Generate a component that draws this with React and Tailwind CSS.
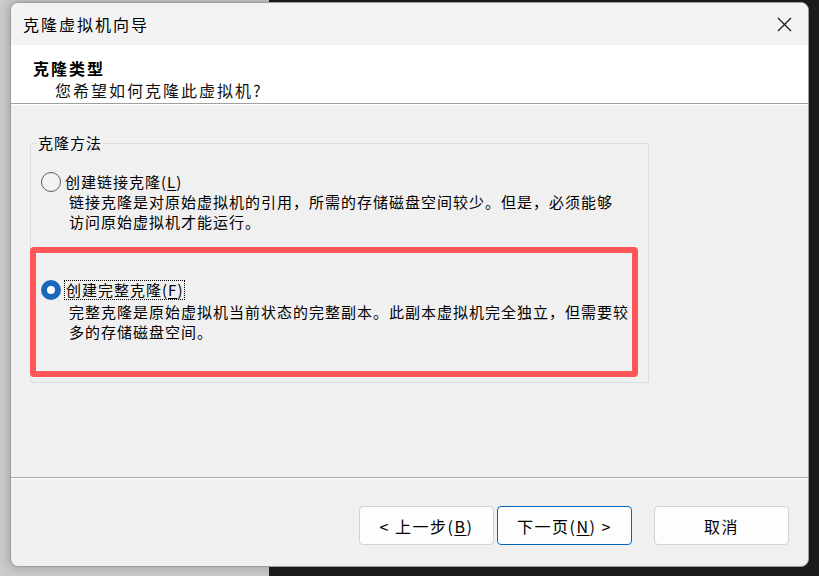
import React from 'react'

const AccessKey = ({ k }) => (
  <>
    (<span className="underline underline-offset-2">{k}</span>)
  </>
)

const Radio = ({ checked }) =>
  checked ? (
    <span className="block h-[20px] w-[20px] shrink-0 rounded-full border-[6px] border-[#1b68bb] bg-white" />
  ) : (
    <span className="block h-[20px] w-[20px] shrink-0 rounded-full border border-[#5f5f5f] bg-[#f3f3f3]" />
  )

const Button = ({ children, primary }) => (
  <button
    type="button"
    className={
      primary
        ? 'flex h-[39px] w-[135px] items-center justify-center rounded-[4px] border border-[#0067c0] bg-[#fdfdfd] text-[16px] tracking-[1.5px] text-black'
        : 'flex h-[39px] w-[135px] items-center justify-center rounded-[4px] border border-[#d2d2d2] bg-[#fdfdfd] text-[16px] tracking-[1.5px] text-black'
    }
  >
    {children}
  </button>
)

export default function App() {
  return (
    <div className="relative h-[576px] w-[819px] overflow-hidden bg-[linear-gradient(to_right,#cbcbcb_269px,#1c1c1c_269px)] pl-[10px] pt-[2px] font-['Noto_Sans_CJK_SC','Noto_Sans',sans-serif] text-black">
      <div className="flex h-[565px] w-[799px] flex-col overflow-hidden rounded-[8px] border border-[#9c9c9c] bg-[#f0f0f0] shadow-[0_0_12px_rgba(0,0,0,0.25)]">
        {/* title bar */}
        <div className="flex h-[42px] shrink-0 items-center justify-between bg-[#f3f3f3] pl-[12px] pr-[16px]">
          <span className="text-[16px] leading-[20px] tracking-[2px]">克隆虚拟机向导</span>
          <svg width="15" height="15" viewBox="0 0 15 15" className="mt-[1px]">
            <path d="M1 1L14 14M14 1L1 14" stroke="#1a1a1a" strokeWidth="1.3" />
          </svg>
        </div>

        {/* header */}
        <div className="h-[59px] shrink-0 border-b border-[#a0a0a0] bg-white pl-[22px] pt-[12px]">
          <div className="text-[16px] font-bold leading-[22px] tracking-[2px]">克隆类型</div>
          <div className="pl-[22px] text-[16px] leading-[22px] tracking-[2px] text-[#111]">
            您希望如何克隆此虚拟机?
          </div>
        </div>
        <div className="h-px shrink-0 bg-white" />

        {/* body */}
        <div className="h-[372px] shrink-0 pl-[19px] pt-[28px]">
          <fieldset className="h-[250px] w-[619px] rounded-[2px] border border-[#dcdcdc] pl-[10px]">
            <legend className="ml-[-4px] px-[1px] text-[15px] leading-[20px] tracking-[1px]">克隆方法</legend>

            <div className="mt-[19px] flex items-center gap-[4px]">
              <Radio />
              <span className="text-[15px] leading-[20px] tracking-[1px]">
                创建链接克隆<AccessKey k="L" />
              </span>
            </div>
            <div className="whitespace-nowrap pl-[28px] text-[15px] leading-[20px] tracking-[1px]">
              链接克隆是对原始虚拟机的引用，所需的存储磁盘空间较少。但是，必须能够
              <br />
              访问原始虚拟机才能运行。
            </div>

            <div className="mt-[48px] flex items-center gap-[3px]">
              <Radio checked />
              <span className="border border-dotted border-black px-px text-[15px] leading-[18px] tracking-[1px]">
                创建完整克隆<AccessKey k="F" />
              </span>
            </div>
            <div className="mt-[2px] whitespace-nowrap pl-[28px] text-[15px] leading-[20px] tracking-[1px]">
              完整克隆是原始虚拟机当前状态的完整副本。此副本虚拟机完全独立，但需要较
              <br />
              多的存储磁盘空间。
            </div>
          </fieldset>
        </div>

        {/* footer */}
        <div className="h-px shrink-0 bg-[#a9a9a9]" />
        <div className="h-px shrink-0 bg-white" />
        <div className="flex flex-1 items-start justify-end pr-[19px] pt-[27px]">
          <div className="flex gap-[3px]">
            <Button>
              &lt; 上一步<AccessKey k="B" />
            </Button>
            <Button primary>
              下一页<AccessKey k="N" /> &gt;
            </Button>
          </div>
          <div className="ml-[22px]">
            <Button>取消</Button>
          </div>
        </div>
      </div>

      {/* annotation box */}
      <div className="absolute left-[30px] top-[247px] h-[130px] w-[608px] rounded-[4px] border-[6px] border-[#ff5757]" />
    </div>
  )
}
